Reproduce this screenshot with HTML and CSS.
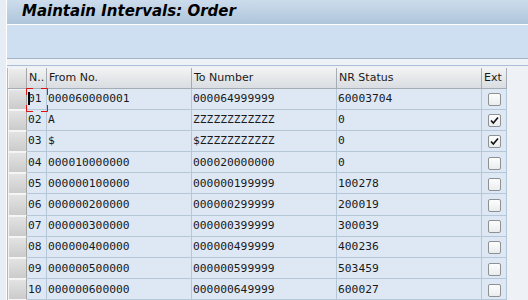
FILE: index.html
```html
<!doctype html>
<html>
  <head>
    <meta charset="UTF-8" />
    <title>Maintain Intervals: Order</title>
    <link rel="stylesheet" href="styles.css">
  </head>
  <body>
    <div class="window">
      <header class="titlebar">
        <h1>Maintain Intervals: Order</h1>
      </header>
      <div class="toolbar"></div>
      <div class="spacer"></div>
      <div class="grid-area">
        <table class="grid">
          <thead>
            <tr>
              <th class="sel"></th>
              <th class="col-no">N..</th>
              <th class="col-from">From No.</th>
              <th class="col-to">To Number</th>
              <th class="col-status">NR Status</th>
              <th class="col-ext">Ext</th>
            </tr>
          </thead>
          <tbody>
            <tr>
              <td class="sel"></td>
              <td class="num focus">
                01
                <span class="caret"></span>
                <svg class="focus-frame" width="22" height="24" viewBox="0 0 22 24">
                  <path d="M0.5 7V0.5H7M15 0.5H21.5V7M21.5 17V23.5H15M7 23.5H0.5V17" fill="none" stroke="#e01010" stroke-width="1" />
                </svg>
              </td>
              <td>000060000001</td>
              <td>000064999999</td>
              <td>60003704</td>
              <td class="ext"><span class="check"></span></td>
            </tr>
            <tr>
              <td class="sel"></td>
              <td class="num">02</td>
              <td>A</td>
              <td>ZZZZZZZZZZZZ</td>
              <td>0</td>
              <td class="ext"><span class="check checked"><svg width="11" height="11" viewBox="0 0 11 11"><path d="M2 5.5L4.3 8L9 2.5" fill="none" stroke="#111" stroke-width="1.6" /></svg></span></td>
            </tr>
            <tr>
              <td class="sel"></td>
              <td class="num">03</td>
              <td>$</td>
              <td>$ZZZZZZZZZZZ</td>
              <td>0</td>
              <td class="ext"><span class="check checked"><svg width="11" height="11" viewBox="0 0 11 11"><path d="M2 5.5L4.3 8L9 2.5" fill="none" stroke="#111" stroke-width="1.6" /></svg></span></td>
            </tr>
            <tr>
              <td class="sel"></td>
              <td class="num">04</td>
              <td>000010000000</td>
              <td>000020000000</td>
              <td>0</td>
              <td class="ext"><span class="check"></span></td>
            </tr>
            <tr>
              <td class="sel"></td>
              <td class="num">05</td>
              <td>000000100000</td>
              <td>000000199999</td>
              <td>100278</td>
              <td class="ext"><span class="check"></span></td>
            </tr>
            <tr>
              <td class="sel"></td>
              <td class="num">06</td>
              <td>000000200000</td>
              <td>000000299999</td>
              <td>200019</td>
              <td class="ext"><span class="check"></span></td>
            </tr>
            <tr>
              <td class="sel"></td>
              <td class="num">07</td>
              <td>000000300000</td>
              <td>000000399999</td>
              <td>300039</td>
              <td class="ext"><span class="check"></span></td>
            </tr>
            <tr>
              <td class="sel"></td>
              <td class="num">08</td>
              <td>000000400000</td>
              <td>000000499999</td>
              <td>400236</td>
              <td class="ext"><span class="check"></span></td>
            </tr>
            <tr>
              <td class="sel"></td>
              <td class="num">09</td>
              <td>000000500000</td>
              <td>000000599999</td>
              <td>503459</td>
              <td class="ext"><span class="check"></span></td>
            </tr>
            <tr>
              <td class="sel"></td>
              <td class="num">10</td>
              <td>000000600000</td>
              <td>000000649999</td>
              <td>600027</td>
              <td class="ext"><span class="check"></span></td>
            </tr>
            <tr>
              <td class="sel"></td>
              <td class="num"></td>
              <td></td>
              <td></td>
              <td></td>
              <td class="ext"><span class="check"></span></td>
            </tr>
          </tbody>
        </table>
      </div>
    </div>
  </body>
</html>
```

FILE: styles.css
```css
* {
  margin: 0;
  padding: 0;
  box-sizing: border-box;
}

html,
body {
  height: 300px;
  overflow: hidden;
}

body {
  background: #e6edf4;
  font-family: "DejaVu Sans", Tahoma, sans-serif;
  font-size: 11px;
  color: #1a1a1a;
}

.window {
  margin-left: 6px;
  height: 300px;
  overflow: hidden;
  border-left: 1px solid #ffffff;
  background: #eef1f6;
}

.titlebar {
  height: 25px;
  padding-left: 15px;
  background: linear-gradient(#ccdcec, #aec5da);
  border-bottom: 1px solid #ffffff;
}

.titlebar h1 {
  font-size: 15px;
  font-weight: bold;
  font-style: italic;
  line-height: 22px;
  color: #000000;
}

.toolbar {
  height: 34px;
  background: #cddff0;
  border-bottom: 1px solid #a2b4c6;
}

.spacer {
  height: 7px;
  border-bottom: 1px solid #a9bdd6;
}

.grid-area {
  padding-top: 2px;
}

.grid {
  border-collapse: separate;
  border-spacing: 0;
  table-layout: fixed;
  width: 500px;
  border-left: 1px solid #a8b8c8;
}

.grid th {
  height: 20.5px;
  padding: 0 2px;
  text-align: left;
  font-weight: normal;
  font-size: 11px;
  white-space: nowrap;
  overflow: hidden;
  background: linear-gradient(#f2f3f4, #d9dde1);
  border-right: 1px solid #a4acb4;
  border-bottom: 1px solid #a4acb4;
}

.grid td {
  height: 21.2px;
  padding: 0 1px;
  font-family: "DejaVu Sans Mono", "Liberation Mono", monospace;
  font-size: 11.3px;
  white-space: nowrap;
  background: #dde8f4;
  border-right: 1px solid #b6c7d8;
  border-bottom: 1px solid #b6c7d8;
}

.grid .sel {
  width: 19px;
  background: linear-gradient(#e4e4e4, #cbcbcb);
  border-right: 1px solid #a6a6a6;
  border-bottom: 1px solid #f6f6f6;
  box-shadow: inset 1px 1px 0 #f4f4f4;
}

.grid th.sel {
  background: linear-gradient(#eeeeee, #d4d4d4);
  border-bottom: 1px solid #a4acb4;
}

.col-no {
  width: 20px;
}

.col-from,
.col-to,
.col-status {
  width: 145px;
}

.col-ext {
  width: 25px;
}

.grid td.num {
  padding-left: 1px;
}

.focus {
  position: relative;
}

.caret {
  position: absolute;
  left: 1px;
  top: 3px;
  width: 2px;
  height: 13px;
  background: #000000;
}

.focus-frame {
  position: absolute;
  left: -1px;
  top: -1px;
}

.grid td.ext {
  padding: 0;
  text-align: center;
}

.check {
  display: inline-flex;
  align-items: center;
  justify-content: center;
  width: 13px;
  height: 13px;
  margin-top: 2px;
  vertical-align: middle;
  border: 1px solid #8e9194;
  border-radius: 2px;
  background: linear-gradient(#fdfdfd, #eaecee);
}
```
